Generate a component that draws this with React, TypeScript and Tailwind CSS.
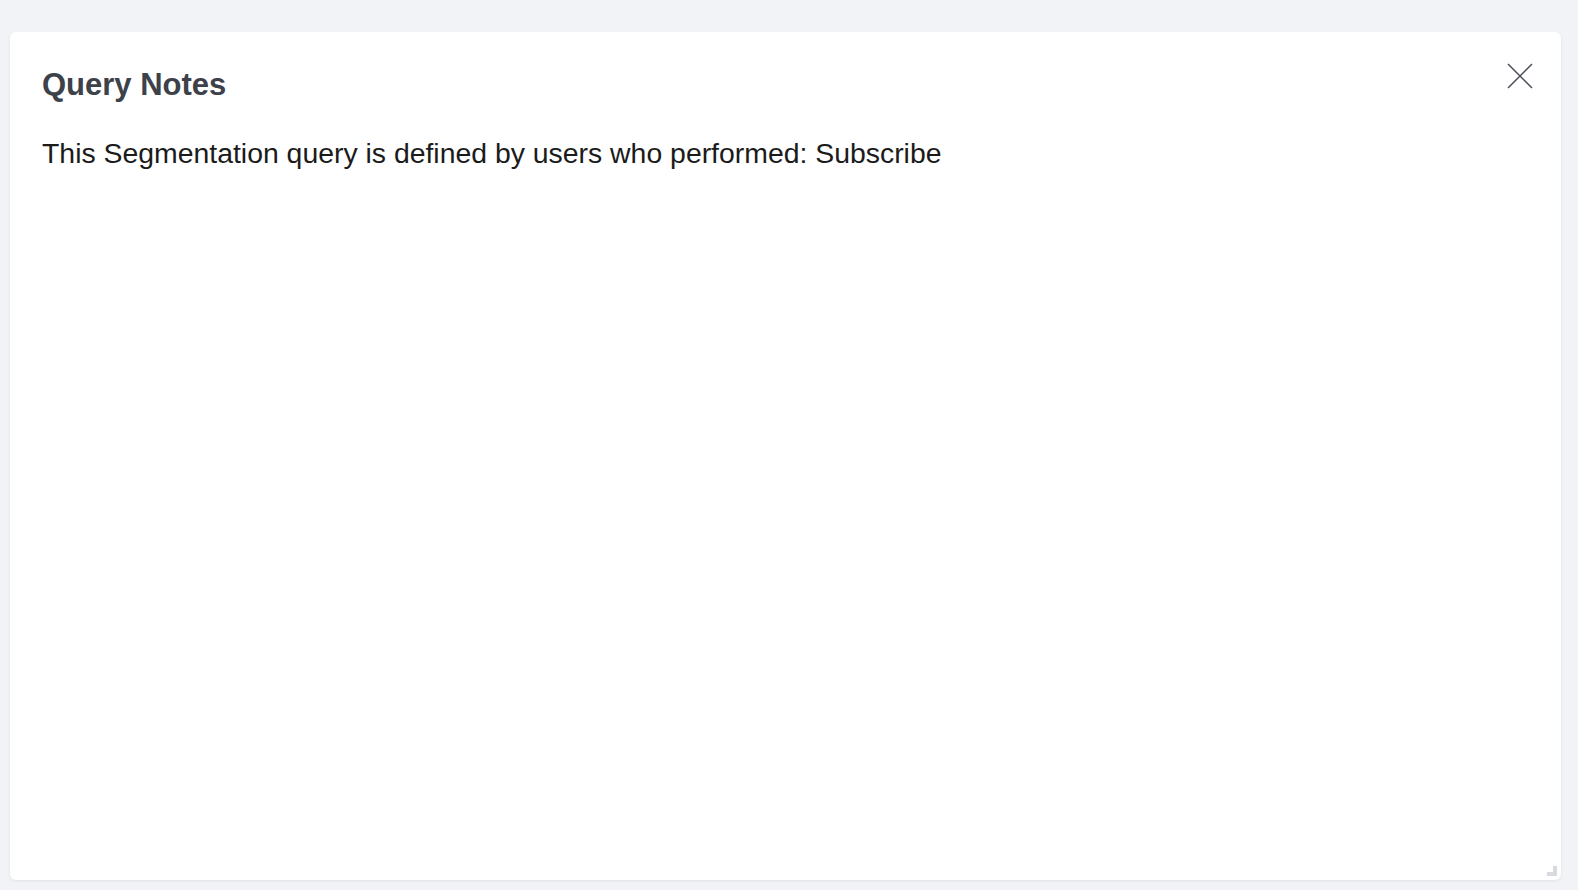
export default function App() {
  return (
    <div className="min-h-screen bg-[#f2f3f7] pt-[32px] pl-[10px] pr-[17px] pb-[10px] font-['Liberation_Sans',Arial,sans-serif]">
      <div className="relative h-[848px] rounded-[6px] bg-white shadow-[0_1px_3px_rgba(0,0,0,0.08)] px-[32px] pt-[35px]">
        <h1 className="text-[31px] leading-[36px] font-bold text-[#3d4149]">Query Notes</h1>
        <p className="mt-[33px] text-[28.4px] leading-[34px] text-[#1b1b1b]">
          This Segmentation query is defined by users who performed: Subscribe
        </p>
        <button className="absolute right-[28px] top-[31px] flex h-[26px] w-[26px] items-center justify-center text-[#4a4f57]">
          <svg width="26" height="26" viewBox="0 0 26 26" fill="none" stroke="currentColor" strokeWidth="1.5">
            <path d="M1 1L25 25M25 1L1 25" />
          </svg>
        </button>
        <svg className="absolute right-[4px] bottom-[4px]" width="10" height="10" viewBox="0 0 10 10" fill="#d8dae0">
          <path d="M6 0H10V10H0V6H6Z" />
        </svg>
      </div>
    </div>
  );
}
